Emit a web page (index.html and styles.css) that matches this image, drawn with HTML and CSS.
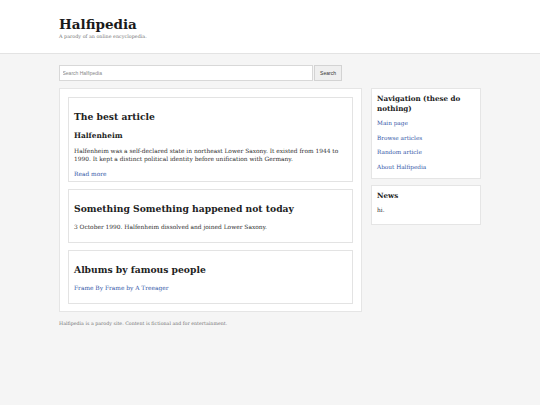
FILE: index.html
```html
<!DOCTYPE html>
<html>
<head>
<meta charset="utf-8">
<link rel="stylesheet" href="styles.css">
</head>
<body>
<header class="site-header">
  <div class="wrap">
    <div class="logo">Halfipedia</div>
    <div class="tagline">A parody of an online encyclopedia.</div>
  </div>
</header>
<div class="wrap page">
  <form class="search">
    <input class="search-input" type="text" placeholder="Search Halfipedia">
    <button class="search-btn" type="button">Search</button>
  </form>
  <div class="layout">
    <main class="main">
      <section class="card">
        <h2>The best article</h2>
        <h3>Halfenheim</h3>
        <p class="lead">Halfenheim was a self-declared state in northeast Lower Saxony. It existed from 1944 to 1990. It kept a distinct political identity before unification with Germany.</p>
        <a class="link more" href="#">Read more</a>
      </section>
      <section class="card">
        <h2>Something Something happened not today</h2>
        <p class="last">3 October 1990. Halfenheim dissolved and joined Lower Saxony.</p>
      </section>
      <section class="card">
        <h2>Albums by famous people</h2>
        <a class="link last" href="#">Frame By Frame by A Treeager</a>
      </section>
    </main>
    <aside class="side">
      <section class="box">
        <h4>Navigation (these do nothing)</h4>
        <ul class="nav">
          <li><a class="link" href="#">Main page</a></li>
          <li><a class="link" href="#">Browse articles</a></li>
          <li><a class="link" href="#">Random article</a></li>
          <li><a class="link" href="#">About Halfipedia</a></li>
        </ul>
      </section>
      <section class="box">
        <h4>News</h4>
        <p class="news">hi.</p>
      </section>
    </aside>
  </div>
  <footer class="footer">Halfipedia is a parody site. Content is fictional and for entertainment.</footer>
</div>
</body>
</html>
```
FILE: styles.css
```css
* { box-sizing: border-box; }
html, body { margin: 0; padding: 0; }
body {
  background: #f5f5f5;
  font-family: "DejaVu Serif", Georgia, serif;
  color: #2e2e2e;
  font-size: 5.9px;
}
.wrap { width: 422px; margin: 0 0 0 59px; }
.site-header {
  background: #fff;
  border-bottom: 1px solid #e3e3e3;
  height: 54px;
  padding-top: 15.5px;
}
.logo {
  font-weight: bold;
  font-size: 13.5px;
  line-height: 16px;
  color: #1a1a1a;
}
.tagline {
  font-size: 4.85px;
  color: #777;
  margin-top: 1.5px;
}
.page { padding-top: 11px; }
.search { display: flex; margin: 0 0 7px 0; width: 283px; }
.search-input {
  flex: 1;
  height: 16px;
  border: 1px solid #d8d8d8;
  background: #fff;
  font-family: "Liberation Sans", Arial, sans-serif;
  font-size: 5px;
  padding: 0 2.5px;
  margin: 0;
  outline: none;
}
.search-input::placeholder { color: #888; }
.search-btn {
  width: 28px;
  height: 16px;
  margin: 0 0 0 1px;
  padding: 0;
  border: 1px solid #d3d3d3;
  background: #efefef;
  font-family: "Liberation Sans", Arial, sans-serif;
  font-size: 5px;
  color: #333;
}
.layout { display: flex; gap: 9px; align-items: flex-start; }
.main {
  width: 303px;
  background: #fff;
  border: 1px solid #e5e5e5;
  padding: 8px 8px 7px 8px;
  display: flex;
  flex-direction: column;
  gap: 7px;
}
.card {
  border: 1px solid #e3e3e3;
  padding: 0 5px;
}
h2 {
  margin: 13px 0 8px 0;
  font-size: 9.2px;
  line-height: 12px;
  font-weight: bold;
  color: #222;
}
h3 {
  margin: 0 0 6px 0;
  font-size: 7.4px;
  line-height: 10px;
  font-weight: bold;
  color: #222;
}
p { margin: 0; line-height: 8px; }
.lead { margin-bottom: 7px; }
.link { color: #3558a8; text-decoration: none; line-height: 8px; }
.more { display: block; margin-bottom: 3px; }
.last { display: block; margin-bottom: 11px; }
.side { width: 110px; display: flex; flex-direction: column; gap: 6px; }
.box {
  background: #fff;
  border: 1px solid #e5e5e5;
  padding: 5px 5px 0 5px;
}
h4 {
  margin: 0 0 5px 0;
  font-size: 7.15px;
  line-height: 10px;
  font-weight: bold;
  color: #222;
}
.nav { list-style: none; margin: 0; padding: 0; font-size: 5.75px; }
.nav li { line-height: 8px; margin-bottom: 6.67px; }
.news { margin-top: 5px; margin-bottom: 10px; }
.footer {
  margin-top: 9px;
  font-size: 4.75px;
  line-height: 6px;
  color: #777;
}
```
